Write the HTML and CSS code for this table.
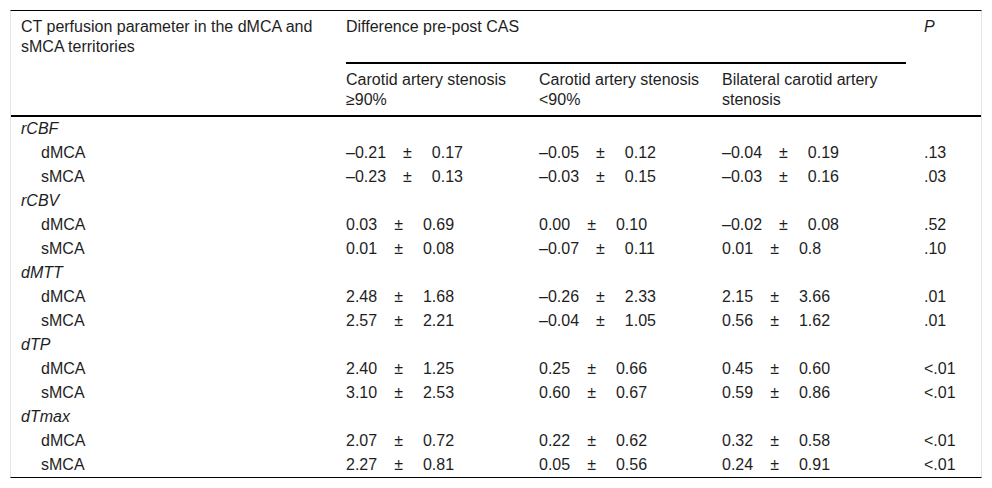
FILE: index.html
```html
<!DOCTYPE html>
<html lang="en">
<head>
<meta charset="utf-8">
<title>CT perfusion table</title>
<link rel="stylesheet" href="styles.css">
</head>
<body>
<div class="tbl">
  <div class="head">
    <div class="h-label">CT perfusion parameter in the dMCA and sMCA territories</div>
    <div class="h-diff">Difference pre-post CAS</div>
    <div class="h-p"><i>P</i></div>
    <div class="h-sub c2">Carotid artery stenosis ≥90%</div>
    <div class="h-sub c3">Carotid artery stenosis &lt;90%</div>
    <div class="h-sub c4">Bilateral carotid artery stenosis</div>
  </div>
  <div class="body">
    <div class="row"><div class="grp">rCBF</div></div>
    <div class="row"><div class="lbl">dMCA</div><div class="v"><span>–0.21</span><span class="pm">±</span><span>0.17</span></div><div class="v"><span>–0.05</span><span class="pm">±</span><span>0.12</span></div><div class="v"><span>–0.04</span><span class="pm">±</span><span>0.19</span></div><div class="p">.13</div></div>
    <div class="row"><div class="lbl">sMCA</div><div class="v"><span>–0.23</span><span class="pm">±</span><span>0.13</span></div><div class="v"><span>–0.03</span><span class="pm">±</span><span>0.15</span></div><div class="v"><span>–0.03</span><span class="pm">±</span><span>0.16</span></div><div class="p">.03</div></div>
    <div class="row"><div class="grp">rCBV</div></div>
    <div class="row"><div class="lbl">dMCA</div><div class="v"><span>0.03</span><span class="pm">±</span><span>0.69</span></div><div class="v"><span>0.00</span><span class="pm">±</span><span>0.10</span></div><div class="v"><span>–0.02</span><span class="pm">±</span><span>0.08</span></div><div class="p">.52</div></div>
    <div class="row"><div class="lbl">sMCA</div><div class="v"><span>0.01</span><span class="pm">±</span><span>0.08</span></div><div class="v"><span>–0.07</span><span class="pm">±</span><span>0.11</span></div><div class="v"><span>0.01</span><span class="pm">±</span><span>0.8</span></div><div class="p">.10</div></div>
    <div class="row"><div class="grp">dMTT</div></div>
    <div class="row"><div class="lbl">dMCA</div><div class="v"><span>2.48</span><span class="pm">±</span><span>1.68</span></div><div class="v"><span>–0.26</span><span class="pm">±</span><span>2.33</span></div><div class="v"><span>2.15</span><span class="pm">±</span><span>3.66</span></div><div class="p">.01</div></div>
    <div class="row"><div class="lbl">sMCA</div><div class="v"><span>2.57</span><span class="pm">±</span><span>2.21</span></div><div class="v"><span>–0.04</span><span class="pm">±</span><span>1.05</span></div><div class="v"><span>0.56</span><span class="pm">±</span><span>1.62</span></div><div class="p">.01</div></div>
    <div class="row"><div class="grp">dTP</div></div>
    <div class="row"><div class="lbl">dMCA</div><div class="v"><span>2.40</span><span class="pm">±</span><span>1.25</span></div><div class="v"><span>0.25</span><span class="pm">±</span><span>0.66</span></div><div class="v"><span>0.45</span><span class="pm">±</span><span>0.60</span></div><div class="p">&lt;.01</div></div>
    <div class="row"><div class="lbl">sMCA</div><div class="v"><span>3.10</span><span class="pm">±</span><span>2.53</span></div><div class="v"><span>0.60</span><span class="pm">±</span><span>0.67</span></div><div class="v"><span>0.59</span><span class="pm">±</span><span>0.86</span></div><div class="p">&lt;.01</div></div>
    <div class="row"><div class="grp">dTmax</div></div>
    <div class="row"><div class="lbl">dMCA</div><div class="v"><span>2.07</span><span class="pm">±</span><span>0.72</span></div><div class="v"><span>0.22</span><span class="pm">±</span><span>0.62</span></div><div class="v"><span>0.32</span><span class="pm">±</span><span>0.58</span></div><div class="p">&lt;.01</div></div>
    <div class="row"><div class="lbl">sMCA</div><div class="v"><span>2.27</span><span class="pm">±</span><span>0.81</span></div><div class="v"><span>0.05</span><span class="pm">±</span><span>0.56</span></div><div class="v"><span>0.24</span><span class="pm">±</span><span>0.91</span></div><div class="p">&lt;.01</div></div>
  </div>
</div>
</body>
</html>
```

FILE: styles.css
```css
html, body {
  margin: 0;
  padding: 0;
  background: #fff;
}

body {
  font-family: "Liberation Sans", Arial, sans-serif;
  font-size: 16px;
  color: #1e1e1e;
}

.tbl {
  box-sizing: border-box;
  width: 972px;
  margin: 10px 0 0 10px;
  border-top: 1px solid #000;
  border-left: 1px solid #e4e4e4;
  border-right: 1px solid #e4e4e4;
  border-bottom: 1px solid #000;
}

.head,
.row {
  display: grid;
  grid-template-columns: 335px 193px 183px 202px 57px;
}

.head {
  grid-template-rows: 53px 51px;
  line-height: 20px;
  border-bottom: 2px solid #000;
}

.h-label {
  grid-row: 1 / 3;
  grid-column: 1;
  padding: 6px 20px 0 10px;
}

.h-diff {
  grid-row: 1;
  grid-column: 2 / 5;
  margin-right: 18px;
  padding-top: 6px;
  border-bottom: 2px solid #000;
}

.h-p {
  grid-row: 1 / 3;
  grid-column: 5;
  padding-top: 6px;
}

.h-sub {
  grid-row: 2;
  padding: 6px 12px 0 0;
}

.c2 { grid-column: 2; }
.c3 { grid-column: 3; }
.c4 { grid-column: 4; }

.row {
  height: 24px;
  line-height: 24px;
}

.grp {
  grid-column: 1 / 6;
  padding-left: 10px;
  font-style: italic;
}

.lbl {
  padding-left: 30px;
}

.v {
  display: flex;
}

.pm {
  margin: 0 20px 0 17px;
}
```
